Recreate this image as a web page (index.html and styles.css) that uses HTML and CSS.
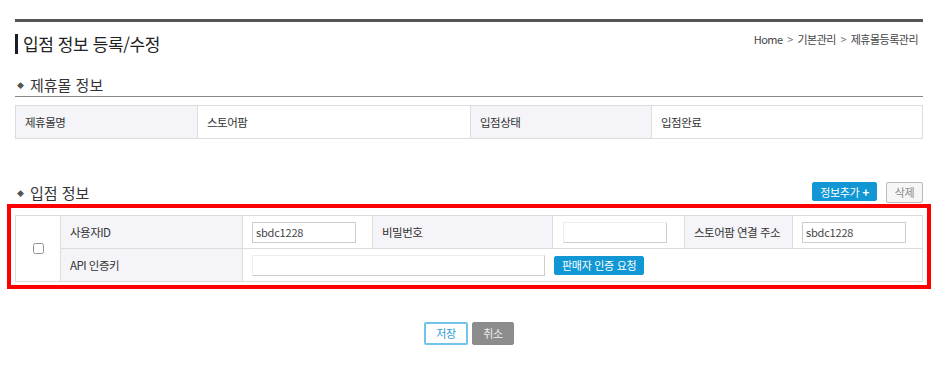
FILE: index.html
```html
<!DOCTYPE html>
<html lang="ko">

<head>
  <meta charset="UTF-8">
  <meta name="viewport" content="width=device-width, initial-scale=1.0">
  <title>입점 정보 등록/수정</title>
  <link rel="stylesheet" href="styles.css">
</head>

<body>
  <div class="page">
    <div class="page-head">
      <h1 class="page-title">입점 정보 등록/수정</h1>
      <div class="breadcrumb">Home <span class="sep">&gt;</span> 기본관리 <span class="sep">&gt;</span> 제휴몰등록관리</div>
    </div>

    <h2 class="section-title underline"><span class="dot">◆</span>제휴몰 정보</h2>
    <table class="info-table">
      <colgroup>
        <col style="width: 182px">
        <col style="width: 273px">
        <col style="width: 181px">
        <col>
      </colgroup>
      <tr>
        <th>제휴몰명</th>
        <td>스토어팜</td>
        <th>입점상태</th>
        <td>입점완료</td>
      </tr>
    </table>

    <div class="section-bar">
      <h2 class="section-title"><span class="dot">◆</span>입점 정보</h2>
      <div class="bar-buttons">
        <button class="btn btn-blue">정보추가 <span class="plus">+</span></button>
        <button class="btn btn-light">삭제</button>
      </div>
    </div>

    <div class="highlight">
      <table class="info-table form-table">
        <colgroup>
          <col style="width: 45px">
          <col style="width: 182px">
          <col style="width: 130px">
          <col style="width: 180px">
          <col style="width: 132px">
          <col style="width: 108px">
          <col>
        </colgroup>
        <tr>
          <td class="check-cell" rowspan="2"><input type="checkbox"></td>
          <th>사용자ID</th>
          <td><input class="field" type="text" value="sbdc1228"></td>
          <th>비밀번호</th>
          <td class="pw-cell"><input class="field field-inset" type="password"></td>
          <th>스토어팜 연결 주소</th>
          <td><input class="field" type="text" value="sbdc1228"></td>
        </tr>
        <tr>
          <th>API 인증키</th>
          <td colspan="5">
            <div class="api-row">
              <input class="field field-inset field-wide" type="text">
              <button class="btn btn-blue btn-small">판매자 인증 요청</button>
            </div>
          </td>
        </tr>
      </table>
    </div>

    <div class="form-actions">
      <button class="btn btn-outline">저장</button>
      <button class="btn btn-gray">취소</button>
    </div>
  </div>
</body>

</html>
```

FILE: styles.css
```css
body {
  margin: 0;
  font-family: "Noto Sans CJK KR", "Noto Sans", sans-serif;
  color: #333;
  background: #fff;
}

.page {
  width: 908px;
  margin: 0 15px;
  padding-top: 19px;
}

.page-head {
  display: flex;
  justify-content: space-between;
  align-items: flex-start;
  border-top: 3px solid #555;
  padding-top: 12px;
}

.page-title {
  margin: 0;
  font-size: 17px;
  font-weight: normal;
  line-height: 20px;
  color: #222;
  border-left: 3px solid #1b1b2a;
  padding-left: 5px;
  letter-spacing: -0.4px;
}

.breadcrumb {
  font-size: 11px;
  line-height: 14px;
  margin-top: -2px;
  margin-right: 5px;
  color: #444;
  letter-spacing: -0.5px;
}

.breadcrumb .sep {
  color: #777;
  margin: 0 2px;
}

.section-title {
  margin: 0;
  font-size: 15px;
  font-weight: normal;
  line-height: 18px;
  color: #333;
}

.section-title .dot {
  font-size: 7px;
  vertical-align: 3px;
  margin: 0 6px 0 2px;
  color: #555;
}

.underline {
  margin-top: 22px;
  padding-bottom: 2px;
  border-bottom: 1px solid #888;
}

.info-table {
  width: 100%;
  table-layout: fixed;
  border-collapse: collapse;
  margin-top: 8px;
  font-size: 11.5px;
  letter-spacing: -0.5px;
}

.info-table th,
.info-table td {
  border: 1px solid #dcdcdc;
  height: 32px;
  padding: 0 9px;
  text-align: left;
  font-weight: normal;
  color: #333;
  white-space: nowrap;
}

.info-table th {
  background: #f5f5f9;
}

.section-bar {
  display: flex;
  justify-content: space-between;
  align-items: center;
  margin-top: 43px;
  height: 21px;
}

.bar-buttons {
  display: flex;
  gap: 9px;
}

.btn {
  font-family: inherit;
  font-size: 11px;
  line-height: 17px;
  letter-spacing: -0.3px;
  border-radius: 2px;
  cursor: pointer;
  padding: 0 7px;
}

.btn-blue {
  background: #1197d4;
  color: #fff;
  border: 1px solid #1197d4;
  height: 19px;
}

.btn-blue .plus {
  font-weight: bold;
  font-size: 12px;
}

.btn-light {
  background: #f6f6f6;
  color: #888;
  border: 1px solid #bbb;
  height: 21px;
  width: 37px;
  padding: 0;
}

.highlight {
  margin: 1px -8px 0;
  border: 4px solid #f00;
  padding: 7px 4px 3px;
}

.form-table {
  margin-top: 0;
}

.check-cell {
  text-align: center !important;
  padding: 0 !important;
}

.check-cell input {
  margin: 0;
  width: 11px;
  height: 11px;
  accent-color: #bbb;
  opacity: 0.8;
}

.field {
  box-sizing: border-box;
  width: 104px;
  height: 21px;
  padding: 0 3px;
  border: 1px solid #ccc;
  font-family: inherit;
  font-size: 11px;
  color: #444;
  letter-spacing: -0.2px;
}

.field-inset {
  border-color: #eee #ccc #ccc #eee;
}

.pw-cell {
  padding-left: 10px !important;
}

.field-wide {
  width: 293px;
}

.api-row {
  display: flex;
  align-items: center;
  gap: 9px;
}

.btn-small {
  height: 19px;
  padding: 0 7px;
}

.form-actions {
  display: flex;
  justify-content: center;
  gap: 4px;
  margin-top: 33px;
}

.btn-outline {
  background: #fff;
  color: #2a9ad4;
  border: 2px solid #72c3ea;
  height: 23px;
  width: 44px;
  padding: 0;
}

.btn-gray {
  background: #8c8c8c;
  color: #eee;
  border: 1px solid #8c8c8c;
  height: 23px;
  width: 42px;
  padding: 0;
}
```
